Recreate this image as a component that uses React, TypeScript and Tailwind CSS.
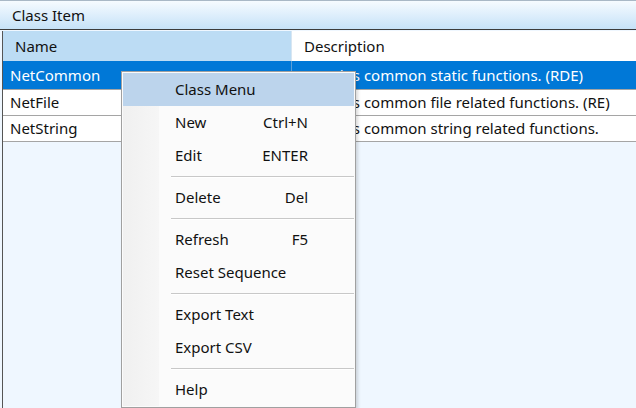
import React from 'react';

const rows = [
  { name: 'NetCommon', desc: 'Contains common static functions. (RDE)' },
  { name: 'NetFile', desc: 'Contains common file related functions. (RE)' },
  { name: 'NetString', desc: 'Contains common string related functions.' },
];

type MenuEntry = { label: string; key?: string } | 'sep';

const menu: MenuEntry[] = [
  { label: 'New', key: 'Ctrl+N' },
  { label: 'Edit', key: 'ENTER' },
  'sep',
  { label: 'Delete', key: 'Del' },
  'sep',
  { label: 'Refresh', key: 'F5' },
  { label: 'Reset Sequence' },
  'sep',
  { label: 'Export Text' },
  { label: 'Export CSV' },
  'sep',
  { label: 'Help' },
];

const App: React.FC = () => {
  return (
    <div
      className="relative w-[636px] h-[408px] overflow-hidden bg-[#eff7ff] text-[15px] text-[#111]"
      style={{ fontFamily: '"Noto Sans", "Open Sans", sans-serif' }}
    >
      {/* title bar */}
      <div className="h-[30px] border-t border-[#a9b8c6] border-b border-b-[#3c3c3c] bg-gradient-to-b from-[#f6fbff] to-[#c6e2f8] flex items-center pl-[12px]">
        Class Item
      </div>

      {/* grid */}
      <div className="ml-[2px] mt-[1px] h-[377px] border-l border-[#555]">
        <div className="flex h-[30px]">
          <div className="w-[289px] bg-[#bcdcf4] border-r border-[#d8e6f2] flex items-center pl-[12px]">
            Name
          </div>
          <div className="flex-1 bg-white flex items-center pl-[12px]">Description</div>
        </div>
        {rows.map((r, i) => (
          <div
            key={r.name}
            className={
              i === 0
                ? 'flex h-[29px] border-b border-[#a5a5a5] bg-[#0078d7] text-white'
                : 'flex h-[26px] border-b border-[#a5a5a5] bg-white'
            }
          >
            <div
              className={
                i === 0
                  ? 'w-[289px] border-r border-[#5d9fd8] flex items-center pl-[7px]'
                  : 'w-[289px] border-r border-[#a5a5a5] flex items-center pl-[7px]'
              }
            >
              {r.name}
            </div>
            <div className="flex-1 flex items-center pl-[6px] whitespace-nowrap">{r.desc}</div>
          </div>
        ))}
      </div>

      {/* context menu */}
      <div className="absolute left-[121px] top-[71px] w-[235px] border border-[#a0a0a0] bg-[#fbfbfb] p-[1px] shadow-[2px_2px_3px_rgba(0,0,0,0.15)]">
        <div className="relative">
          <div className="absolute left-0 top-0 bottom-0 w-[36px] bg-gradient-to-r from-[#f0f0f0] to-[#f6f6f6]" />
          <div className="relative h-[33px] bg-[#bcd4ec] flex items-center pl-[52px]">Class Menu</div>
          {menu.map((m, i) =>
            m === 'sep' ? (
              <div key={i} className="relative h-[9px] flex items-center pl-[48px]">
                <div className="w-full h-[2px] border-t border-[#c8c8c8] border-b border-b-white" />
              </div>
            ) : (
              <div key={i} className="relative h-[33px] flex items-center pl-[52px] pr-[46px]">
                <span className="flex-1">{m.label}</span>
                {m.key && <span>{m.key}</span>}
              </div>
            )
          )}
        </div>
      </div>
    </div>
  );
};

export default App;
